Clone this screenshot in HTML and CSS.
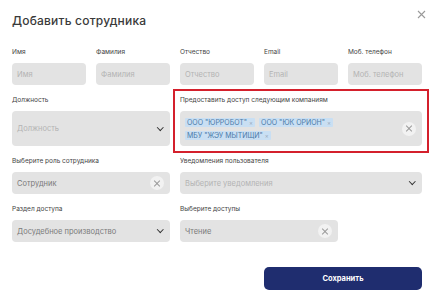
FILE: index.html
```html
<!DOCTYPE html>
<html lang="ru">
<head>
    <meta charset="UTF-8">
    <title>Добавить сотрудника</title>
    <link rel="stylesheet" href="styles.css">
</head>
<body>
    <div class="modal">
        <button class="close" type="button">
            <svg width="9" height="9" viewBox="0 0 9 9"><path d="M1 1L8 8M8 1L1 8" stroke="#9a9a9a" stroke-width="1.1"/></svg>
        </button>
        <h2>Добавить сотрудника</h2>

        <form class="grid">
            <div class="field">
                <label>Имя</label>
                <div class="box"><span class="ph">Имя</span></div>
            </div>
            <div class="field">
                <label>Фамилия</label>
                <div class="box"><span class="ph">Фамилия</span></div>
            </div>
            <div class="field">
                <label>Отчество</label>
                <div class="box"><span class="ph">Отчество</span></div>
            </div>
            <div class="field">
                <label>Email</label>
                <div class="box"><span class="ph">Email</span></div>
            </div>
            <div class="field">
                <label>Моб. телефон</label>
                <div class="box"><span class="ph">Моб. телефон</span></div>
            </div>

            <div class="field span2">
                <label>Должность</label>
                <div class="box tall"><span class="ph">Должность</span><span class="chev"></span></div>
            </div>
            <div class="field span3 marked">
                <label>Предоставить доступ следующим компаниям</label>
                <div class="box tall">
                    <div class="tags">
                        <span class="tag">ООО "ЮРРОБОТ" <i>×</i></span>
                        <span class="tag">ООО "ЮК ОРИОН" <i>×</i></span>
                        <span class="tag">МБУ "ЖЭУ МЫТИЩИ" <i>×</i></span>
                    </div>
                    <span class="clear"></span>
                </div>
            </div>

            <div class="field span2">
                <label>Выберите роль сотрудника</label>
                <div class="box"><span class="val">Сотрудник</span><span class="clear"></span></div>
            </div>
            <div class="field span3">
                <label>Уведомления пользователя</label>
                <div class="box"><span class="ph">Выберите уведомления</span><span class="chev"></span></div>
            </div>

            <div class="field span2">
                <label>Раздел доступа</label>
                <div class="box"><span class="val">Досудебное производство</span><span class="chev"></span></div>
            </div>
            <div class="field span2">
                <label>Выберите доступы</label>
                <div class="box"><span class="val">Чтение</span><span class="clear"></span></div>
            </div>
        </form>

        <div class="actions">
            <button class="save" type="button">Сохранить</button>
        </div>
    </div>
</body>
</html>
```

FILE: styles.css
```css
body {
    font-family: Inter, "Noto Sans", sans-serif;
    background: #ffffff;
    margin: 0;
    color: #333;
}
.modal {
    position: relative;
    padding: 11px 12px 0 12px;
}
h2 {
    margin: 0;
    font-size: 12px;
    line-height: 20px;
    font-weight: 500;
    color: #3a3a3a;
    letter-spacing: 0.2px;
}
.close {
    position: absolute;
    top: 7px;
    right: 8px;
    border: none;
    background: none;
    padding: 0;
    width: 9px;
    height: 9px;
}
.grid {
    display: grid;
    grid-template-columns: repeat(5, 74px);
    column-gap: 10px;
    row-gap: 11px;
    margin-top: 17px;
}
.span2 {
    grid-column: span 2;
}
.span3 {
    grid-column: span 3;
}
.field label {
    display: block;
    font-size: 6.5px;
    line-height: 9px;
    color: #444;
    margin-bottom: 6px;
    white-space: nowrap;
}
.box {
    height: 22px;
    background: #e3e3e3;
    border-radius: 4px;
    display: flex;
    align-items: center;
    padding: 0 6px 0 5px;
    box-sizing: border-box;
}
.box.tall {
    height: 35px;
}
.ph, .val {
    font-size: 7.5px;
    flex: 1;
    white-space: nowrap;
}
.ph {
    color: #b3b3b3;
}
.val {
    color: #7a7a7a;
}
.marked {
    outline: 2px solid #d4202c;
    outline-offset: 5px;
}
.tags {
    flex: 1;
    display: flex;
    flex-wrap: wrap;
    gap: 4px 4px;
    padding-right: 50px;
}
.tag {
    background: #c9dff3;
    color: #4a7aa8;
    font-size: 7px;
    line-height: 9px;
    padding: 0 2px;
    border-radius: 1px;
    white-space: nowrap;
}
.tag i {
    font-style: normal;
    color: #9ab;
    font-size: 6px;
}
.clear {
    width: 14px;
    height: 14px;
    border-radius: 50%;
    background: #f2f2f2;
    position: relative;
    flex: none;
}
.clear::before, .clear::after {
    content: "";
    position: absolute;
    left: 3px;
    top: 6.5px;
    width: 8px;
    height: 1px;
    background: #9a9a9a;
    transform: rotate(45deg);
}
.clear::after {
    transform: rotate(-45deg);
}
.chev {
    width: 3.5px;
    height: 3.5px;
    border-right: 1.4px solid #333;
    border-bottom: 1.4px solid #333;
    transform: rotate(45deg);
    margin: -3px 2px 0 0;
    flex: none;
}
.actions {
    display: flex;
    justify-content: flex-end;
    margin-top: 25px;
}
.save {
    width: 158px;
    height: 23px;
    background: #1f2d6f;
    color: #fff;
    border: none;
    border-radius: 5px;
    font-family: Inter, "Noto Sans", sans-serif;
    font-size: 7.5px;
    font-weight: 700;
}
```
